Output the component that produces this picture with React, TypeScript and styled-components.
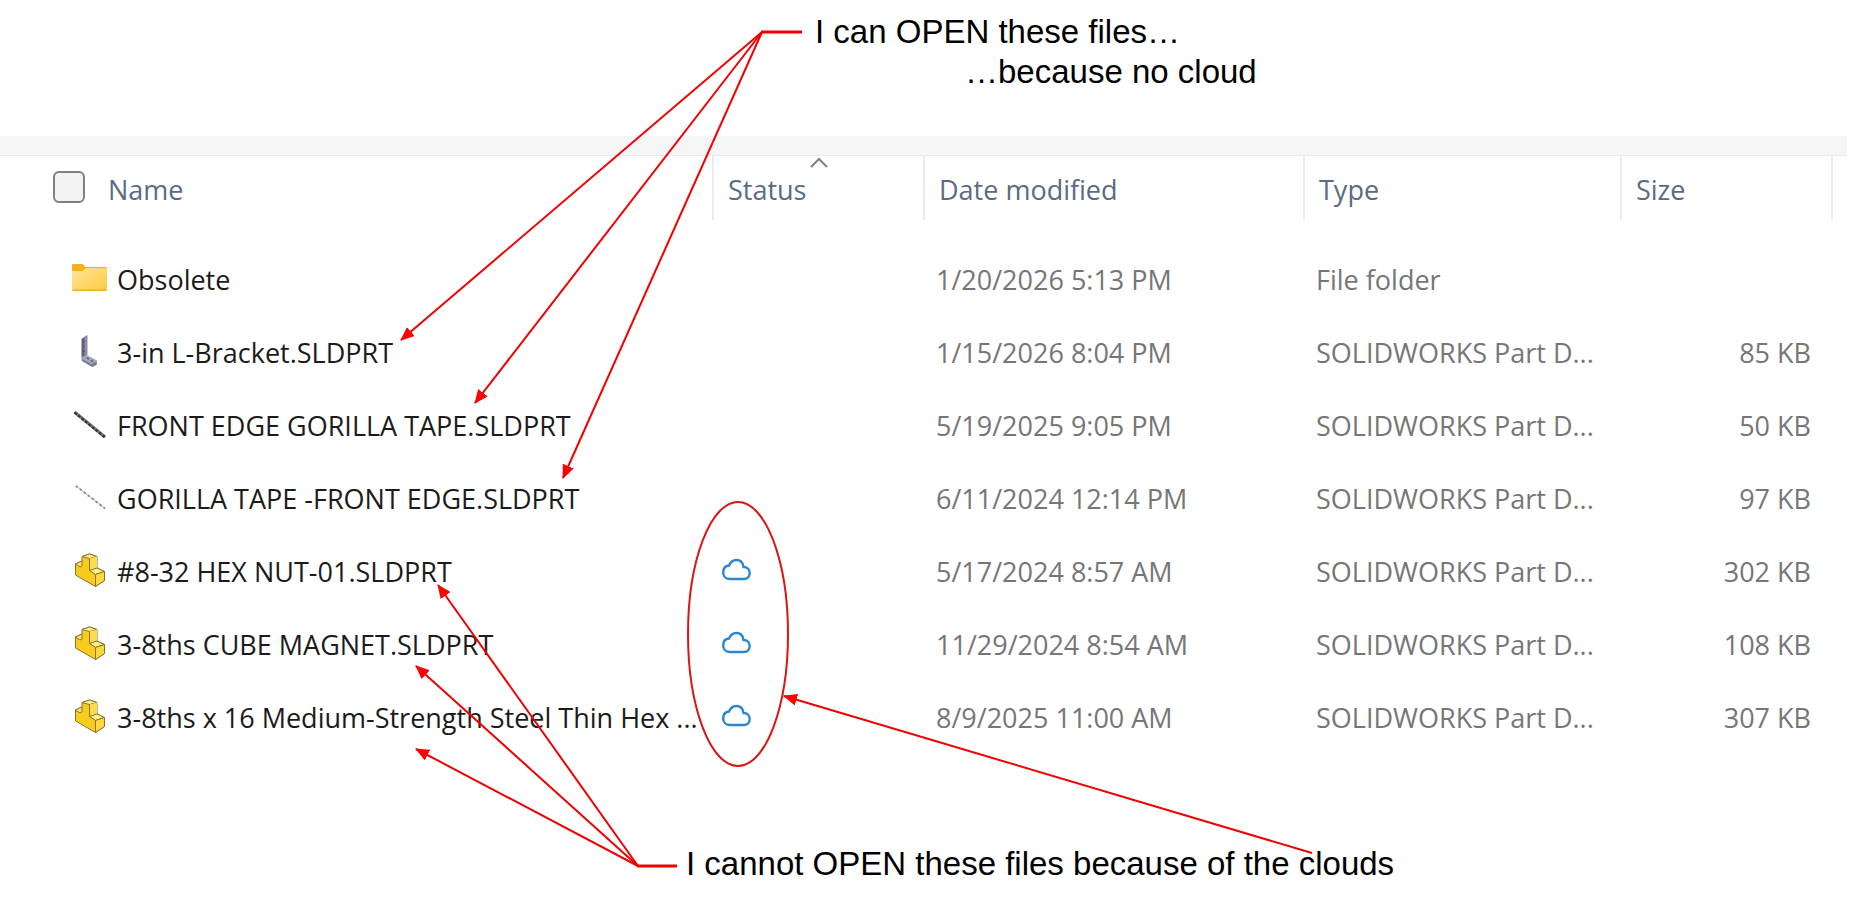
import React from "react";
import styled, { createGlobalStyle } from "styled-components";

const GlobalStyle = createGlobalStyle`
  * { box-sizing: border-box; }
  body {
    margin: 0;
    background: #fff;
    font-family: "Open Sans", "Noto Sans", sans-serif;
  }
`;

const Page = styled.main`
  position: relative;
  min-height: 100vh;
  overflow: hidden;
`;

const Note = styled.p<{ $indent: number }>`
  margin: 0;
  padding-left: ${(p) => p.$indent}px;
  font: 33px/40px "Liberation Sans", Arial, sans-serif;
  color: #000;
  white-space: nowrap;
`;

const TopNotes = styled.header`
  padding: 12px 0 44px;
`;

const BottomNotes = styled.footer`
  padding-top: 90px;
`;

const Explorer = styled.section`
  margin-right: 29px;
  border-top: 19px solid #f4f5f7;
`;

const FileTable = styled.table`
  width: 100%;
  table-layout: fixed;
  border-collapse: separate;
  border-spacing: 0;
  border-top: 1px solid #e9eaeb;
`;

const Col = styled.col<{ $width?: number }>`
  width: ${(p) => (p.$width ? `${p.$width}px` : "auto")};
`;

const HeadCell = styled.th<{ $last?: boolean; $lead?: boolean }>`
  position: relative;
  height: 64px;
  padding: 0 0 2px ${(p) => (p.$lead ? 53 : 14)}px;
  border-right: ${(p) => (p.$last ? "0" : "2px solid #ebebeb")};
  text-align: left;
  font-weight: 400;
`;

const HeadInner = styled.div`
  display: flex;
  align-items: center;
  gap: 23px;
`;

const SortButton = styled.button`
  padding: 6px 0 0;
  border: 0;
  background: none;
  color: #5a6b85;
  font: inherit;
  font-size: 27px;
  line-height: 36px;
`;

const SortMark = styled.svg`
  position: absolute;
  top: 0;
  left: 50%;
  width: 20px;
  height: 12px;
  margin-left: -10px;
`;

const SelectAll = styled.input`
  appearance: none;
  width: 32px;
  height: 32px;
  margin: 0;
  border: 2px solid #808080;
  border-radius: 6px;
  background: #f3f3f3;
`;

const Body = styled.tbody`
  &::before {
    content: "";
    display: block;
    height: 23px;
  }
`;

const Cell = styled.td<{ $align?: "right" }>`
  height: 73px;
  padding: 0 ${(p) => (p.$align ? 22 : 0)}px 0 11px;
  text-align: ${(p) => p.$align ?? "left"};
  color: #767676;
  font-size: 27px;
  line-height: 36px;
  white-space: nowrap;
`;

const NameCell = styled(Cell)`
  padding-left: 72px;
  color: #1b1b1b;
`;

const StatusCell = styled(Cell)`
  padding-left: 8px;
`;

const FileName = styled.div`
  display: flex;
  align-items: center;
  gap: 9px;
`;

const Icon = styled.svg`
  display: block;
  flex: none;
  width: 36px;
  height: 36px;
  margin-bottom: 2px;
`;

const Arrows = styled.svg`
  position: absolute;
  top: 0;
  left: 0;
  width: 1876px;
  height: 905px;
  pointer-events: none;
`;

type Kind = "folder" | "bracket" | "tape" | "thinTape" | "part";

const FileIcon = ({ kind }: { kind: Kind }) => {
  switch (kind) {
    case "folder":
      return (
        <Icon viewBox="0 0 36 36" aria-hidden>
          <defs>
            <linearGradient id="folder" x1="0" y1="0" x2="1" y2="1">
              <stop offset="0" stopColor="#ffe59a" />
              <stop offset="1" stopColor="#fecb3e" />
            </linearGradient>
          </defs>
          <path d="M0 4q0-1 1-1h10l2 3h21q1 0 1 1v4H0z" fill="#f3b21b" />
          <path d="M0 10h11l3-3h20q1 0 1 1v20q0 2-2 2H2q-2 0-2-2z" fill="url(#folder)" />
          <path d="M0 28.500q0 1.500 2 1.500h31q2 0 2-1.500z" fill="#eeb02c" />
        </Icon>
      );
    case "bracket":
      return (
        <Icon viewBox="0 0 36 36" aria-hidden>
          <path d="M9.500 5l5-3.500v20l-5 3z" fill="#62627a" />
          <path d="M12.500 3l3-2v20l-3 1z" fill="#8d8da4" />
          <path d="M9.500 23l5-2 10.500 5.500v4l-4.500 2.500-11-7z" fill="#a3a5bb" />
          <path d="M10 25l10.500 6v2L10 27z" fill="#74768f" />
          <path d="M12 7v1M12 12v1M12 17v1M15 24l2 1M19 26.500l2 1" stroke="#48485c" strokeWidth="1.300" />
          <path d="M20.500 29.500l4-2v3l-4 2.500z" fill="#77798f" />
        </Icon>
      );
    case "tape":
      return (
        <Icon viewBox="0 0 36 36" aria-hidden>
          <path d="M2.500 5L33 30" stroke="#7b7f81" strokeWidth="3.400" />
          <path d="M2.500 5.500L33 30.500" stroke="#303436" strokeWidth="2.200" strokeDasharray="3 1.500" />
        </Icon>
      );
    case "thinTape":
      return (
        <Icon viewBox="0 0 36 36" aria-hidden>
          <path d="M4 6L33 28.500" stroke="#c9c9d4" strokeWidth="1.500" />
          <path d="M4 6L33 28.500" stroke="#85859a" strokeWidth="2" strokeDasharray="2 3" />
        </Icon>
      );
    case "part":
      return (
        <Icon viewBox="0 0 36 36" aria-hidden stroke="#8a7430" strokeWidth="1" strokeLinejoin="round">
          <path
            d="M3.500 11L10 8V3.500L17.500 1L25 3.500V15L32.500 18.500V27.500L23.500 33.500L3.500 22Z"
            fill="#f7cc1c"
          />
          <path d="M10 3.500L17.500 1L25 3.500L17.500 5.500Z" fill="#fff08a" />
          <path d="M17.500 5.500L25 3.500V15L18.500 17.500Z" fill="#fbdc50" stroke="none" />
          <path d="M17.500 5.500V17L23.500 21" fill="none" />
          <path d="M17.500 17.500L25 15L32.500 18.500L23.500 21.500Z" fill="#fff08a" />
          <path d="M23.500 21.500L32.500 18.500V27.500L23.500 33.500Z" fill="#fbd93f" />
          <path d="M3.500 11L10 8V13L8 14Z" fill="#ffe667" />
        </Icon>
      );
  }
};

const CloudIcon = () => (
  <Icon viewBox="0 0 36 36" role="img" aria-label="Available when online">
    <path
      d="M7.500 26C3.500 26 1.200 23 1.200 19.500C1.200 15.500 3.500 12.800 7 12.500C8.500 9 11 7 14.300 7C18.300 7 21 9.800 21.500 14C25.500 14 27.700 16.800 27.700 20C27.700 23.500 25.300 26 22 26Z"
      fill="#fff"
      stroke="#2a86d1"
      strokeWidth="2.400"
    />
  </Icon>
);

interface FileRow {
  kind: Kind;
  name: string;
  cloud?: boolean;
  date: string;
  type: string;
  size?: string;
}

const part = "SOLIDWORKS Part D...";

const files: FileRow[] = [
  { kind: "folder", name: "Obsolete", date: "1/20/2026 5:13 PM", type: "File folder" },
  { kind: "bracket", name: "3-in L-Bracket.SLDPRT", date: "1/15/2026 8:04 PM", type: part, size: "85 KB" },
  { kind: "tape", name: "FRONT EDGE GORILLA TAPE.SLDPRT", date: "5/19/2025 9:05 PM", type: part, size: "50 KB" },
  { kind: "thinTape", name: "GORILLA TAPE -FRONT EDGE.SLDPRT", date: "6/11/2024 12:14 PM", type: part, size: "97 KB" },
  { kind: "part", name: "#8-32 HEX NUT-01.SLDPRT", cloud: true, date: "5/17/2024 8:57 AM", type: part, size: "302 KB" },
  { kind: "part", name: "3-8ths CUBE MAGNET.SLDPRT", cloud: true, date: "11/29/2024 8:54 AM", type: part, size: "108 KB" },
  { kind: "part", name: "3-8ths x 16 Medium-Strength Steel Thin Hex ...", cloud: true, date: "8/9/2025 11:00 AM", type: part, size: "307 KB" },
];

// Each arrow runs from its caption to the thing it points at.
const arrows = [
  [762, 32, 401, 340],
  [762, 32, 475, 403],
  [762, 32, 563, 478],
  [638, 866, 438, 585],
  [638, 866, 416, 666],
  [638, 866, 416, 749],
  [1312, 853, 784, 696],
];

export default function App() {
  return (
    <Page>
      <GlobalStyle />
      <TopNotes>
        <Note $indent={815}>I can OPEN these files…</Note>
        <Note $indent={965}>…because no cloud</Note>
      </TopNotes>
      <Explorer>
        <FileTable>
          <colgroup>
            <Col $width={714} />
            <Col $width={211} />
            <Col $width={380} />
            <Col $width={317} />
            <Col $width={211} />
            <Col />
          </colgroup>
          <thead>
            <tr>
              <HeadCell $lead scope="col">
                <HeadInner>
                  <SelectAll type="checkbox" aria-label="Select all" />
                  <SortButton type="button">Name</SortButton>
                </HeadInner>
              </HeadCell>
              <HeadCell scope="col" aria-sort="ascending">
                <SortMark viewBox="0 0 20 12" aria-hidden>
                  <path d="M2 11L10 3L18 11" fill="none" stroke="#808080" strokeWidth="2" />
                </SortMark>
                <SortButton type="button">Status</SortButton>
              </HeadCell>
              <HeadCell scope="col">
                <SortButton type="button">Date modified</SortButton>
              </HeadCell>
              <HeadCell scope="col">
                <SortButton type="button">Type</SortButton>
              </HeadCell>
              <HeadCell scope="col">
                <SortButton type="button">Size</SortButton>
              </HeadCell>
              <HeadCell as="td" $last />
            </tr>
          </thead>
          <Body>
            {files.map((f) => (
              <tr key={f.name}>
                <NameCell>
                  <FileName>
                    <FileIcon kind={f.kind} />
                    {f.name}
                  </FileName>
                </NameCell>
                <StatusCell>{f.cloud && <CloudIcon />}</StatusCell>
                <Cell>{f.date}</Cell>
                <Cell>{f.type}</Cell>
                <Cell $align="right">{f.size}</Cell>
                <Cell />
              </tr>
            ))}
          </Body>
        </FileTable>
      </Explorer>
      <BottomNotes>
        <Note $indent={686}>I cannot OPEN these files because of the clouds</Note>
      </BottomNotes>
      <Arrows viewBox="0 0 1876 905" fill="none" stroke="#f00000" strokeWidth="2" aria-hidden>
        <defs>
          <marker id="head" markerUnits="userSpaceOnUse" markerWidth="14" markerHeight="12" refX="13" refY="6" orient="auto">
            <path d="M0 0L14 6L0 12z" fill="#ff0000" stroke="none" />
          </marker>
        </defs>
        <path d="M761 32H802M637 866H677" strokeWidth="3" />
        {arrows.map(([x1, y1, x2, y2]) => (
          <line key={`${x2}-${y2}`} x1={x1} y1={y1} x2={x2} y2={y2} markerEnd="url(#head)" />
        ))}
        <ellipse cx="738" cy="634" rx="50" ry="132" stroke="#dc1414" />
      </Arrows>
    </Page>
  );
}
